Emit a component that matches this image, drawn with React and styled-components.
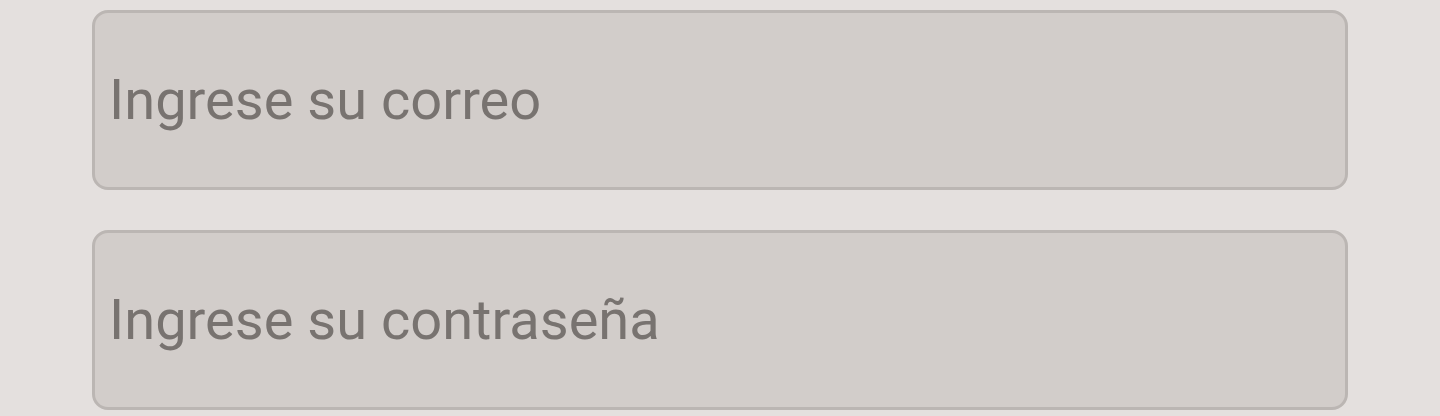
import React from 'react';
import styled, { createGlobalStyle } from 'styled-components';

const GlobalStyle = createGlobalStyle`
  html, body {
    margin: 0;
    padding: 0;
    background: #e4e0de;
    font-family: Roboto, "Noto Sans", Arial, sans-serif;
  }
`;

const Form = styled.form`
  display: flex;
  flex-direction: column;
  gap: 40px;
  padding: 10px 92px;
`;

const Field = styled.input`
  box-sizing: border-box;
  width: 100%;
  height: 180px;
  margin: 0;
  padding: 0 14px;
  border: 3px solid #bbb6b3;
  border-radius: 16px;
  background: #d2cdca;
  font-family: Roboto, sans-serif;
  font-size: 56px;
  color: #787370;
  outline: none;

  &::placeholder {
    color: #787370;
    opacity: 1;
  }
`;

export default function App() {
  return (
    <>
      <GlobalStyle />
      <Form onSubmit={(e) => e.preventDefault()}>
        <Field type="email" placeholder="Ingrese su correo" />
        <Field type="password" placeholder="Ingrese su contraseña" />
      </Form>
    </>
  );
}
